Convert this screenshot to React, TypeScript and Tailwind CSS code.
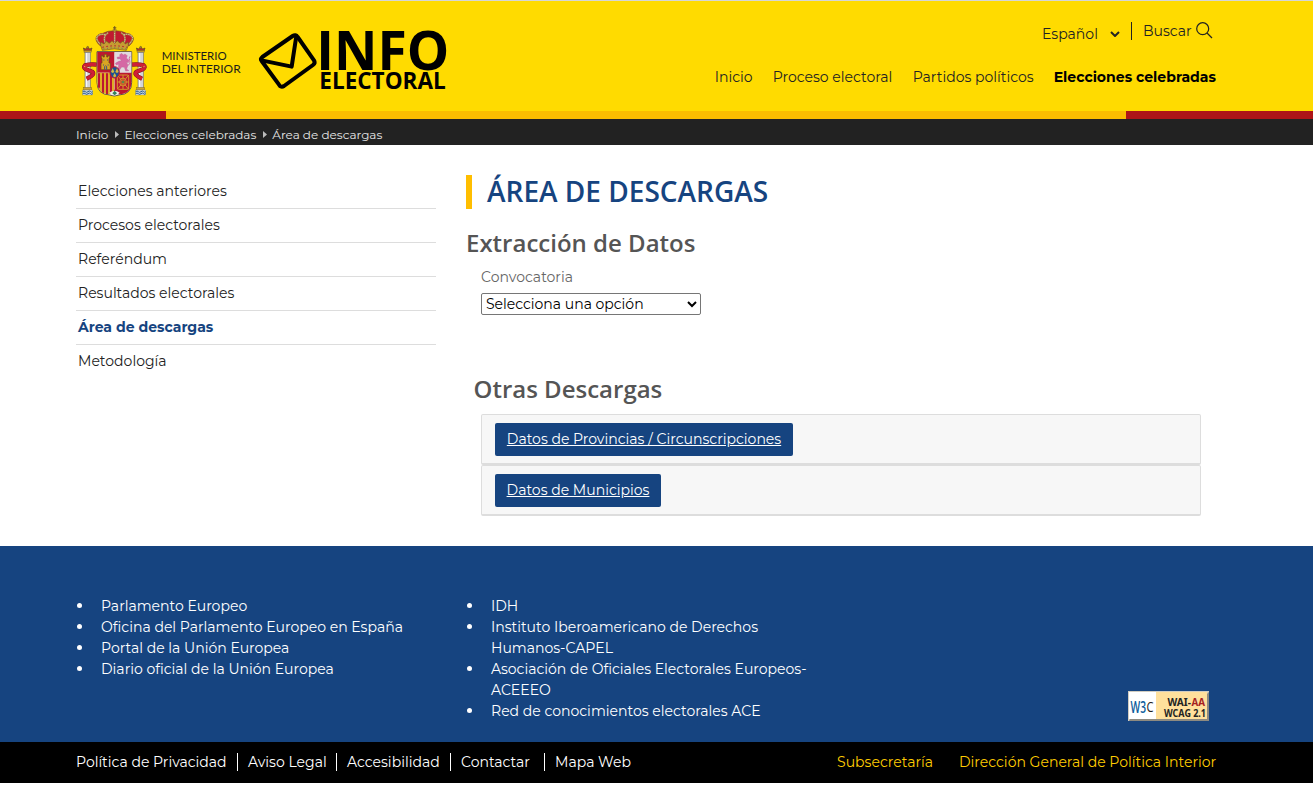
import React from "react";

type Item = { label: string; cls: string };

const mainNav: Item[] = [
  { label: "Inicio", cls: "w-[38px]" },
  { label: "Proceso electoral", cls: "w-[120px]" },
  { label: "Partidos políticos", cls: "w-[121px]" },
  { label: "Elecciones celebradas", cls: "w-[162.3px] font-bold text-black" },
];

const sideNav: Item[] = [
  { label: "Elecciones anteriores", cls: "border-b" },
  { label: "Procesos electorales", cls: "border-b" },
  { label: "Referéndum", cls: "border-b" },
  { label: "Resultados electorales", cls: "border-b" },
  { label: "Área de descargas", cls: "border-b font-bold text-[#164480]" },
  { label: "Metodología", cls: "" },
];

const linksLeft: Item[] = [
  { label: "Parlamento Europeo", cls: "" },
  { label: "Oficina del Parlamento Europeo en España", cls: "" },
  { label: "Portal de la Unión Europea", cls: "" },
  { label: "Diario oficial de la Unión Europea", cls: "" },
];

const linksRight: Item[] = [
  { label: "IDH", cls: "" },
  { label: "Instituto Iberoamericano de Derechos\nHumanos-CAPEL", cls: "" },
  { label: "Asociación de Oficiales Electorales Europeos-\nACEEEO", cls: "" },
  { label: "Red de conocimientos electorales ACE", cls: "" },
];

const legal: Item[] = [
  { label: "Política de Privacidad", cls: "w-[162px] border-r" },
  { label: "Aviso Legal", cls: "w-[99px] pl-[10px] border-r" },
  { label: "Accesibilidad", cls: "w-[114px] pl-[10px] border-r" },
  { label: "Contactar", cls: "w-[94px] pl-[10px] border-r" },
  { label: "Mapa Web", cls: "pl-[10px]" },
];

function Pillar({ x }: { x: number }) {
  return (
    <g transform={`translate(${x} 0)`}>
      <path d="M-10 108l-3-9 7 3 6-7 6 7 7-3-3 9z" fill="#b5342c" stroke="#5c4a20" strokeWidth="2" />
      <circle cx="0" cy="97" r="3" fill="#a98728" stroke="#5c4a20" />
      <rect x="-11" y="106" width="22" height="6" fill="#c59a2c" stroke="#5c4a20" strokeWidth="1" />
      <rect x="-8" y="112" width="16" height="108" fill="#d3d5d8" stroke="#77787a" strokeWidth="2" />
      <path d="M-3 114v104" stroke="#fff" strokeWidth="3" />
      <rect x="-12" y="217" width="24" height="8" fill="#c9a23a" stroke="#5c4a20" strokeWidth="1" />
      <rect x="-15" y="225" width="30" height="15" fill="#d4dcdc" stroke="#69766f" strokeWidth="1" />
      <path d="M-15 230q4-4 8 0t8 0 8 0 6 0M-15 236q4-4 8 0t8 0 8 0 6 0" fill="none" stroke="#21578f" strokeWidth="3" />
    </g>
  );
}

function Ministry() {
  return (
    <svg className="h-[72px] w-[164px] shrink-0" viewBox="30 30 492 216">
      <Pillar x={53} />
      <Pillar x={212} />
      <g fill="none" stroke="#7d1420" strokeWidth="13">
        <path d="M80 149q-20-2-35 2q-7 6 3 12l18 7q12 8-16 21" />
        <path d="M186 149q20-2 35 2q7 6-3 12l-18 7q-12 8 16 21" />
      </g>
      <g fill="none" stroke="#cf1f36" strokeWidth="10">
        <path d="M80 149q-20-2-35 2q-7 6 3 12l18 7q12 8-16 21" />
        <path d="M186 149q20-2 35 2q7 6-3 12l-18 7q-12 8 16 21" />
      </g>
      <g fill="none" stroke="#e0a94f" strokeWidth="3" strokeDasharray="4 4">
        <path d="M42 154l28 8M224 154l-28 8" />
      </g>
      <path d="M81 110h104v92q0 36-38 38l-14 3-14-3q-38-2-38-38z" fill="#e7e7e4" stroke="#5d5147" strokeWidth="3" />
      <path d="M82 111h51v62H82z" fill="#bd1730" />
      <path d="M134 111h50v62h-50z" fill="#e2dade" />
      <path d="M82 173h51v55q-8 10-16 10-35-2-35-36z" fill="#dfac26" />
      <path d="M134 173h50v29q0 34-36 36-8 0-14-10z" fill="#bd1730" />
      <path d="M87 175v43M99 175v58M111 175v62M123 175v60" stroke="#bd1730" strokeWidth="6" />
      <path d="M93 164v-20h3v-14h-2v-8h5v4h4v-8h7v8h4v-4h5v8h-2v14h4v20z" fill="#d9a522" stroke="#6a481a" strokeWidth="2" />
      <path d="M104 164v-9q3-6 6 0v9M100 135h3M111 135h3M99 150h3M113 150h3" stroke="#39527d" strokeWidth="3" fill="none" />
      <path d="M149 119l6-4 5 5 5-3 7 5-3 7 8 7-2 7-6-2 5 9-4 12 7 5-10 1-4-11-8-1-7 10-8-1 5-6 1-11-7 2-3-5 10-6 8-2-4-6-7 1-2-5 9-2z" fill="#d568a4" stroke="#b35a90" strokeWidth="1" />
      <path d="M172 152q10-4 7-15q-3-7 1-13" stroke="#d568a4" strokeWidth="3" fill="none" />
      <g fill="none" stroke="#d4952b" strokeWidth="3">
        <rect x="142" y="180" width="34" height="43" rx="4" />
        <path d="M142 180l34 43M176 180l-34 43M159 180v43M142 201h34" />
        <ellipse cx="159" cy="201" rx="10" ry="12" />
      </g>
      <circle cx="159" cy="201" r="4" fill="#5b8948" />
      <ellipse cx="134" cy="172" rx="14" ry="17" fill="#1b5191" stroke="#bd1730" strokeWidth="3" />
      <g fill="#d8b540">
        <path d="M128 160l3 6 2 5-5 3-5-3 2-5zM141 160l3 6 2 5-5 3-5-3 2-5zM134 174l3 5 2 5-5 3-5-3 2-5z" />
      </g>
      <path d="M118 233q16-12 31 0l-10 8h-12z" fill="#f2efe7" />
      <path d="M127 235l7-8 7 8-7 6z" fill="#34815b" />
      <path d="M132 228l2-5 2 5z" fill="#c4162c" />
      <path d="M90 92q-16-15-11-26 5-10 20-11 12-8 35-8t35 8q15 1 20 11 5 11-11 26z" fill="#c01a30" stroke="#6e5620" strokeWidth="2" />
      <g fill="none" stroke="#a48346" strokeWidth="5">
        <path d="M91 88q-15-15-9-24 9-9 24-5M177 88q15-15 9-24-9-9-24-5M106 85q-9-24 9-32M162 85q9-24-9-32M134 84V49" />
      </g>
      <g fill="none" stroke="#eee5cb" strokeWidth="2.5" strokeDasharray="2.5 3">
        <path d="M91 88q-15-15-9-24 9-9 24-5M177 88q15-15 9-24-9-9-24-5M106 85q-9-24 9-32M162 85q9-24-9-32M134 84V49" />
      </g>
      <path d="M92 91l1-10 9 6 7-9 9 7 8-8 8 8 8-8 8 8 9-7 7 9 8-6 1 10-6 15q-36-9-72 0z" fill="#c69c32" stroke="#6e5620" strokeWidth="2" />
      <path d="M97 97q37-9 74 0" fill="none" stroke="#b91f30" strokeWidth="3" strokeDasharray="5 7" />
      <path d="M100 102q34-7 68 0" fill="none" stroke="#2e6d78" strokeWidth="2" strokeDasharray="3 8" />
      <circle cx="134" cy="45" r="5" fill="#c49a29" stroke="#6e5620" />
      <path d="M134 33v13M129 38h10" stroke="#6e5620" strokeWidth="2.5" />
      <g fontFamily="Lato, sans-serif" fontSize="37" fill="#1d1d1b">
        <text x="275" y="136" textLength="195" lengthAdjust="spacingAndGlyphs">MINISTERIO</text>
        <text x="275" y="174" textLength="237" lengthAdjust="spacingAndGlyphs">DEL INTERIOR</text>
      </g>
    </svg>
  );
}

function InfoLogo() {
  return (
    <svg className="h-[67px] w-[194px] shrink-0" viewBox="20 15 582 201">
      <g fill="none" stroke="#000" strokeWidth="12" strokeLinejoin="round">
        <path d="M36 111L127 48Q136 42 142 51L191 121Q196 129 188 135L101 198Q92 204 86 194L34 123Q29 117 36 111Z" />
        <path d="M34 121L124 140L138 48" />
      </g>
      <g fontFamily="'Open Sans', 'Noto Sans', sans-serif" fontWeight="700">
        <text x="198" y="149" fontSize="159" textLength="399" lengthAdjust="spacingAndGlyphs">INFO</text>
        <text x="207" y="206" fontSize="68" textLength="379" lengthAdjust="spacingAndGlyphs">ELECTORAL</text>
      </g>
    </svg>
  );
}

function Badge() {
  return (
    <svg className="h-[30px] w-[81px]" viewBox="0 0 81 30">
      <rect width="81" height="30" fill="#d2cdc0" />
      <path d="M1 30h80V1l-2 2v25H2z" fill="#8d8a80" />
      <rect x="1" y="1" width="27" height="27" fill="#fff" />
      <rect x="28" y="1" width="51" height="27" fill="#ffe09c" />
      <g fontFamily="'Open Sans', sans-serif">
        <text x="2.500" y="21.500" fontSize="16" fontWeight="600" fill="#0b5c9c" textLength="15.500" lengthAdjust="spacingAndGlyphs">W3</text>
        <text x="18.500" y="20.500" fontSize="15" fill="#222" textLength="7" lengthAdjust="spacingAndGlyphs">C</text>
      </g>
      <g fontFamily="'Noto Sans', sans-serif" fontWeight="700" fontSize="10" fill="#222">
        <text x="39.500" y="14.500" textLength="23.500" lengthAdjust="spacingAndGlyphs">WAI-</text>
        <text x="63.500" y="14.500" fill="#a51e22" textLength="13.500" lengthAdjust="spacingAndGlyphs">AA</text>
        <text x="36" y="25.500" textLength="42" lengthAdjust="spacingAndGlyphs">WCAG 2.1</text>
      </g>
    </svg>
  );
}

function LinkList({ items }: { items: Item[] }) {
  return (
    <ul className="w-[390px]">
      {items.map((i) => (
        <li key={i.label} className="flex leading-[21px]">
          <span className="mt-[6.5px] ml-[0.9px] size-[5.6px] shrink-0 rounded-full bg-white" />
          <a className={`ml-[18.5px] whitespace-pre ${i.cls}`}>{i.label}</a>
        </li>
      ))}
    </ul>
  );
}

function Crumb() {
  return (
    <svg className="mr-[5px] ml-[7px] h-[7px] w-[4px]" viewBox="0 0 4 7">
      <path d="M0 0l4 3.500L0 7z" fill="#bbb" />
    </svg>
  );
}

export default function App() {
  return (
    <div className="h-[785px] overflow-hidden bg-white font-[Montserrat,Inter,sans-serif] text-[14.04px] leading-[20px] text-[#222]">
      <header className="h-[111px] border-t border-[#d6d6d6] bg-[#ffdb00]">
        <div className="ml-[76px] flex h-full w-[1140px] justify-between">
          <div className="flex gap-[13px] pt-6 pl-1">
            <Ministry />
            <InfoLogo />
          </div>
          <div className="flex flex-col items-end">
            <div className="mt-[19px] flex h-[27px] items-start pr-[3px]">
              <span className="mt-[4px] w-[68px]">Español</span>
              <svg className="mt-[11px] h-[6px] w-[10px]" viewBox="0 0 10 6">
                <path d="M1 1l4 4 4-4" fill="none" stroke="#222" strokeWidth="2" />
              </svg>
              <span className="mt-[2px] ml-[11px] h-[18px] w-px bg-[#222]" />
              <span className="mt-px ml-[11px] w-[53px]">Buscar</span>
              <svg className="mt-[2px] h-[17px] w-[17px]" viewBox="0 0 17 17">
                <circle cx="6.700" cy="6.700" r="6" fill="none" stroke="#222" strokeWidth="1.200" />
                <path d="M11 11l5 5" stroke="#222" strokeWidth="1.200" />
              </svg>
            </div>
            <nav className="mt-[20px] flex gap-5 whitespace-nowrap">
              {mainNav.map((n) => (
                <a key={n.label} className={n.cls}>{n.label}</a>
              ))}
            </nav>
          </div>
        </div>
      </header>
      <div className="flex h-2">
        <div className="w-[166px] bg-[#ad1518]" />
        <div className="w-[960px] bg-[#fabd00]" />
        <div className="grow bg-[#ad1518]" />
      </div>
      <div className="flex h-[26px] items-center bg-[#222] pt-[5px] pl-[76px] text-[12px] text-[#e6e6e6]">
        <span>Inicio</span>
        <Crumb />
        <span>Elecciones celebradas</span>
        <Crumb />
        <span>Área de descargas</span>
      </div>

      <main className="ml-[76px] flex h-[401px] w-[1140px] gap-[30px] pt-[30px]">
        <nav className="w-[360px]">
          {sideNav.map((n) => (
            <a key={n.label} className={`block h-[34px] border-[#ddd] pt-[6px] pl-[2px] ${n.cls}`}>{n.label}</a>
          ))}
        </nav>
        <section className="w-[750px] font-['Open_Sans','Noto_Sans',sans-serif]">
          <h1 className="flex h-[34px] items-center border-l-[6px] border-[#ffbe00] pb-[2px] pl-[15px] text-[28px] font-semibold text-[#164480]">
            ÁREA DE DESCARGAS
          </h1>
          <h2 className="mt-[17px] h-[35px] text-[24px] leading-[34px] font-semibold text-[#555]">Extracción de Datos</h2>
          <div className="flex flex-col items-start pl-[15px] font-[Montserrat,Inter,sans-serif]">
            <label className="mt-[6px] text-[#666]">Convocatoria</label>
            <select className="mt-[6px] h-[22px] w-[220px] appearance-auto rounded-[2px] border border-[#767676] bg-white text-[14px] text-black">
              <option>Selecciona una opción</option>
            </select>
          </div>
          <h2 className="mt-[57px] h-[35px] pl-[7.5px] text-[24px] leading-[34px] font-semibold text-[#555]">Otras Descargas</h2>
          <div className="mt-[7px] ml-[15px] w-[720px] font-[Montserrat,Inter,sans-serif] text-white">
            <div className="h-[51px] rounded-[2px] border border-b-2 border-[#ddd] bg-[#f7f7f7] pt-[8px] pl-[13px]">
              <a className="flex h-[33px] w-[298px] items-center justify-center rounded-[2px] bg-[#164480] pb-[2px] underline">
                Datos de Provincias / Circunscripciones
              </a>
            </div>
            <div className="h-[51px] rounded-[2px] border border-b-2 border-[#ddd] bg-[#f7f7f7] pt-[8px] pl-[13px]">
              <a className="flex h-[33px] w-[166px] items-center justify-center rounded-[2px] bg-[#164480] pb-[2px] underline">
                Datos de Municipios
              </a>
            </div>
          </div>
        </section>
      </main>

      <footer>
        <div className="flex h-[196px] bg-[#164480] pt-[50px] pl-[76px] text-white">
          <LinkList items={linksLeft} />
          <LinkList items={linksRight} />
          <div className="ml-[272px] pt-[95px]">
            <Badge />
          </div>
        </div>
        <div className="flex h-[41px] items-start justify-between bg-black pt-[11px] pr-[97px] pl-[76px] text-white">
          <div className="flex leading-[18px] whitespace-nowrap">
            {legal.map((l) => (
              <a key={l.label} className={`h-[18px] border-white ${l.cls}`}>{l.label}</a>
            ))}
          </div>
          <div className="flex leading-[18px] text-[#ffcc00]">
            <a className="w-[122px]">Subsecretaría</a>
            <a className="w-[257px] whitespace-nowrap">Dirección General de Política Interior</a>
          </div>
        </div>
      </footer>
    </div>
  );
}
